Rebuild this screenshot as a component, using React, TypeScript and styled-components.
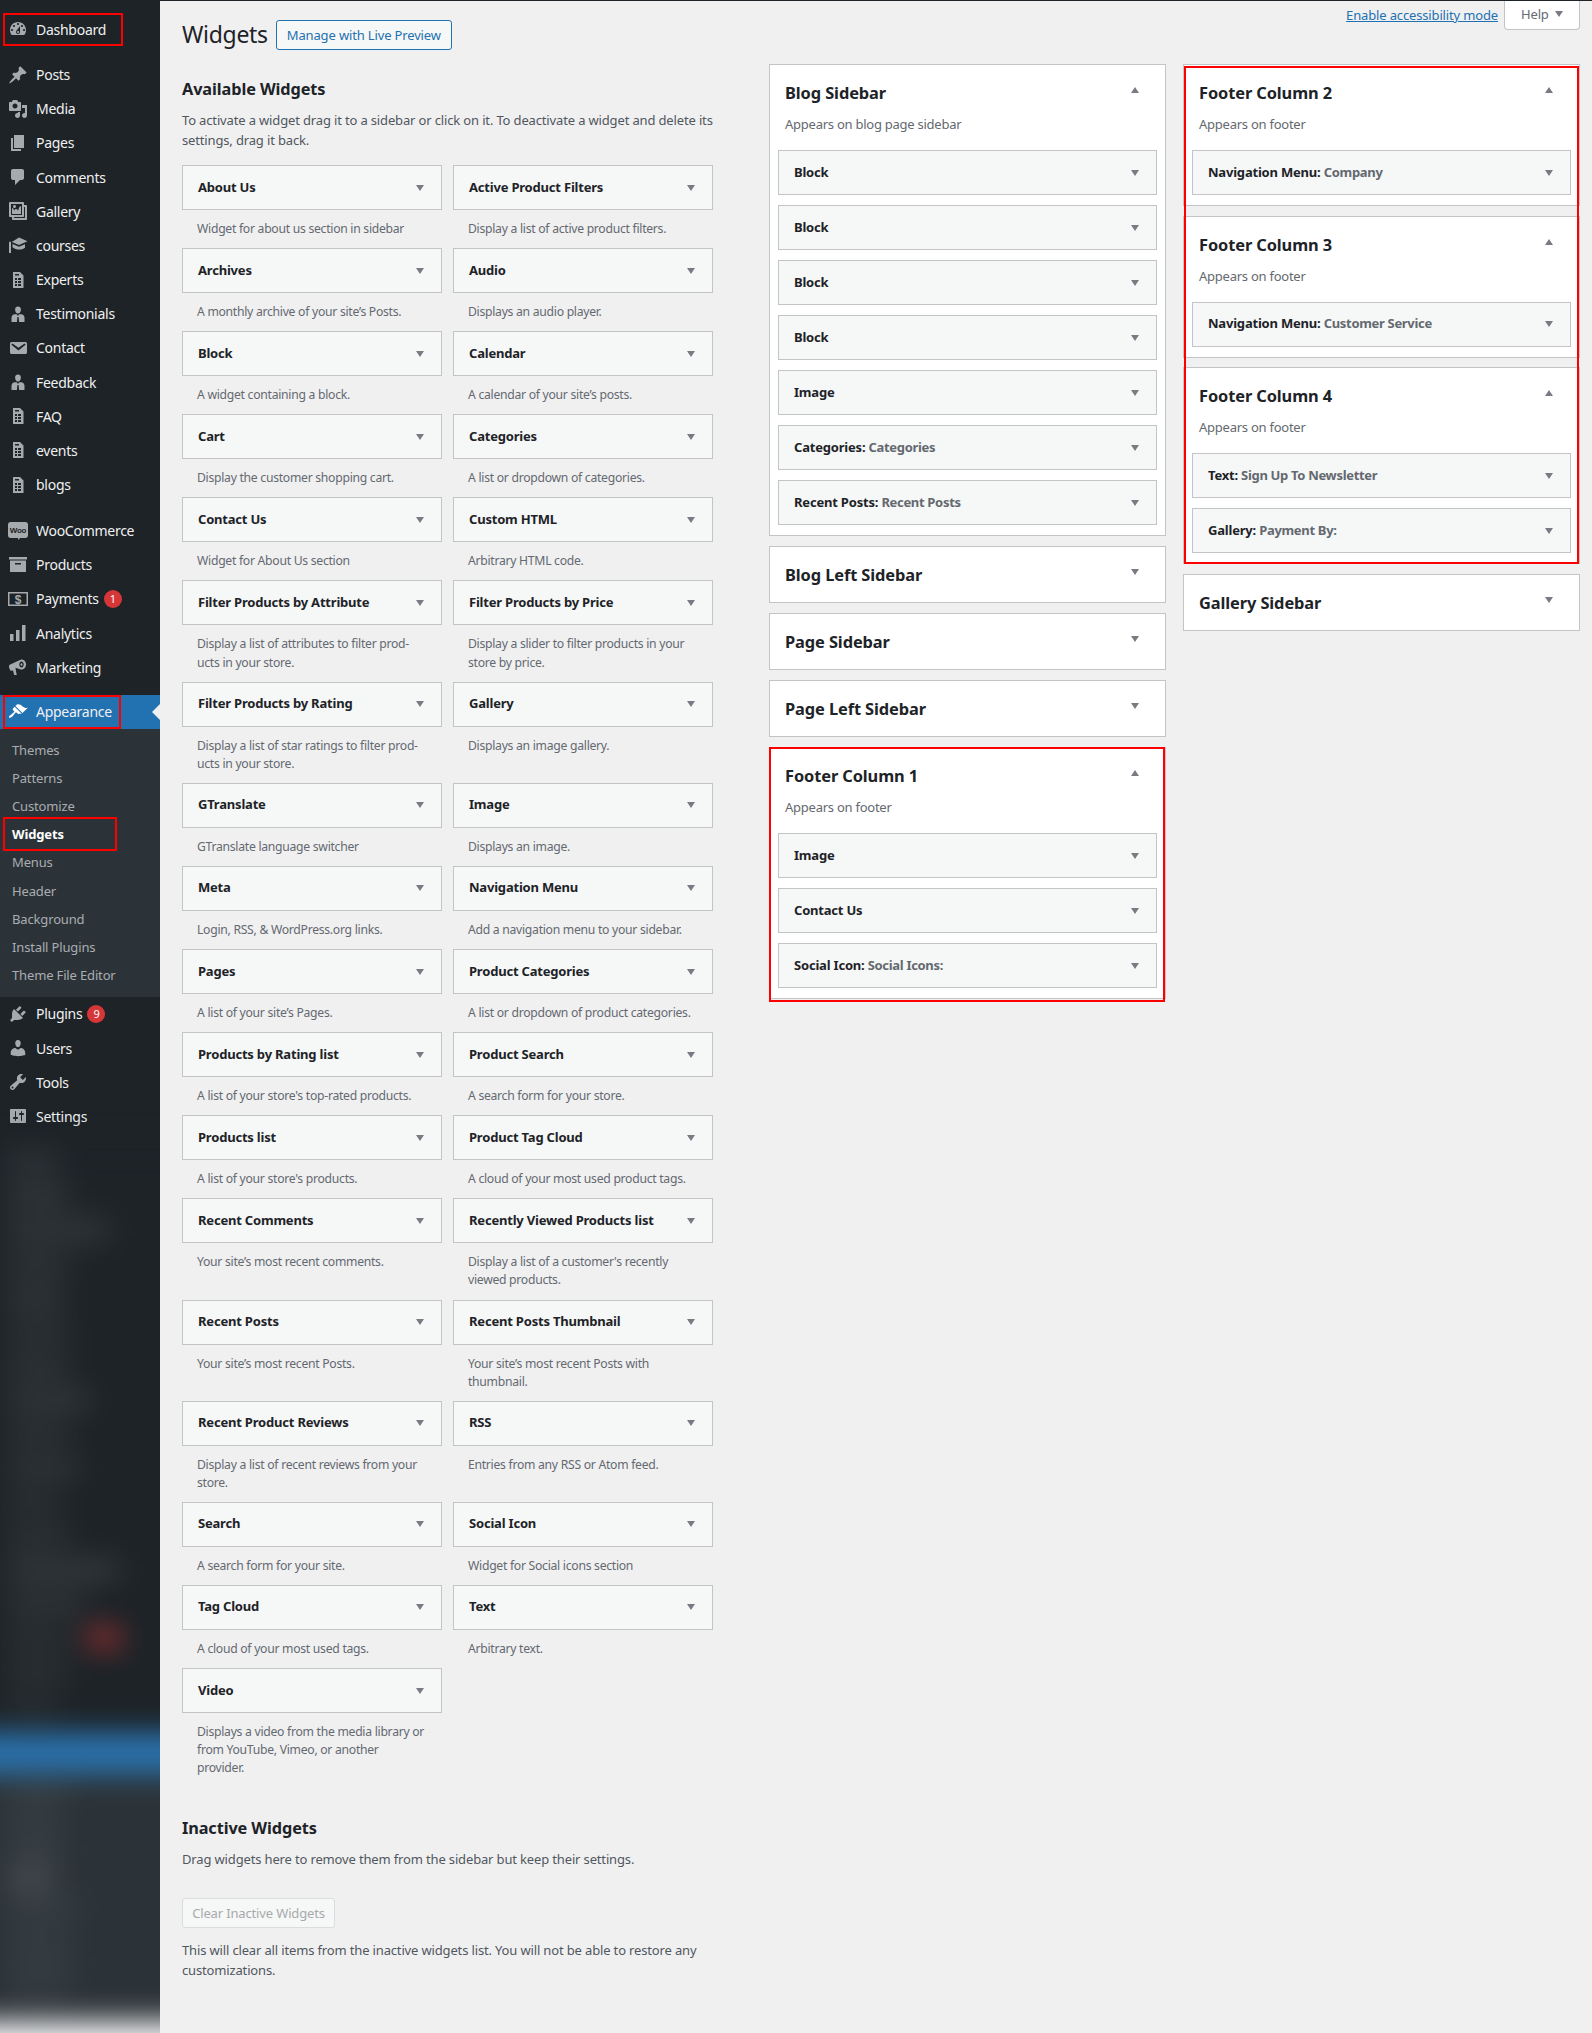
import React from "react";
import styled, { createGlobalStyle } from "styled-components";

const FONT = `"Noto Sans", "Open Sans", "Liberation Sans", sans-serif`;

const Global = createGlobalStyle`
  html, body { margin: 0; padding: 0; background: #f0f0f1; }
  body { font-family: ${FONT}; font-size: 13px; color: #3c434a; }
  * { box-sizing: border-box; }
`;

const Shell = styled.div`
  display: flex;
  width: 1592px;
  height: 2033px;
  overflow: hidden;
  border-top: 1px solid #1d2327;
  background: #f0f0f1;
`;

const Side = styled.aside`
  flex: 0 0 160px;
  width: 160px;
  height: 2032px;
  overflow: hidden;
  background: linear-gradient(#1d2327 1500px, transparent 1500px);
`;

const Nav = styled.nav`
  display: flex;
  flex-direction: column;
  padding-top: 11.4px;
  height: 1144px;
`;

const Sep = styled.div<{ $h: number }>`
  flex: 0 0 ${(p) => p.$h}px;
`;

const Row = styled.div<{ $active?: boolean }>`
  position: relative;
  flex: 0 0 34.17px;
  display: flex;
  align-items: center;
  padding-left: 8px;
  font-size: 14px;
  letter-spacing: -0.27px;
  color: #f0f0f1;
  background: ${(p) => (p.$active ? "#2271b1" : "transparent")};
  svg { flex: 0 0 20px; width: 20px; height: 20px; fill: ${(p) => (p.$active ? "#fff" : "#a7aaad")}; }
`;

const Label = styled.span`
  margin-left: 8px;
  white-space: nowrap;
`;

const Badge = styled.span`
  display: inline-flex;
  align-items: center;
  justify-content: center;
  width: 18px;
  height: 18px;
  margin-left: 5px;
  border-radius: 50%;
  background: #d63638;
  color: #fff;
  font-size: 11px;
`;

const Pointer = styled.span`
  position: absolute;
  right: 0;
  top: 50%;
  margin-top: -8px;
  border: 8px solid transparent;
  border-left-width: 0;
  border-right-color: #f0f0f1;
`;

const Sub = styled.div`
  flex: 0 0 268px;
  padding: 7px 0;
  background: #2c3338;
  display: flex;
  flex-direction: column;
`;

const SubRow = styled.div<{ $current?: boolean }>`
  position: relative;
  flex: 0 0 28.12px;
  display: flex;
  align-items: center;
  padding-left: 12px;
  font-size: 13px;
  letter-spacing: -0.15px;
  font-weight: ${(p) => (p.$current ? 700 : 400)};
  color: ${(p) => (p.$current ? "#fff" : "#a9adb1")};
`;

const Mark = styled.span<{ $t: number; $l: number; $w: number; $h: number }>`
  position: absolute;
  top: ${(p) => p.$t}px;
  left: ${(p) => p.$l}px;
  width: ${(p) => p.$w}px;
  height: ${(p) => p.$h}px;
  border: 2px solid #ff0000;
  pointer-events: none;
  z-index: 2;
`;

const BlurArea = styled.div`
  margin: 0 -40px;
  height: 876px;
  filter: blur(14px);
  display: flex;
  flex-direction: column;
  background: #1d2327;
`;

const BlurDark = styled.div`
  flex: 0 0 587px;
  display: flex;
  flex-direction: column;
`;

const BlurBlue = styled.div`
  flex: 0 0 42px;
  background: #2a72ad;
`;

const BlurSub = styled.div`
  flex: 1;
  padding-top: 7px;
  background: #2c3338;
  display: flex;
  flex-direction: column;
`;

const BlurRow = styled.div<{ $h: number }>`
  flex: 0 0 ${(p) => p.$h}px;
  display: flex;
  align-items: center;
  gap: 12px;
  padding-left: 48px;
`;

const BlurBar = styled.span<{ $w: number; $o: number }>`
  display: block;
  width: ${(p) => p.$w}px;
  height: 20px;
  background: rgba(255, 255, 255, ${(p) => p.$o});
`;

const BlurBadge = styled.span`
  display: block;
  width: 36px;
  height: 24px;
  margin-left: 6px;
  background: #d63638;
  opacity: 0.55;
`;

const Content = styled.main`
  flex: 1;
  display: flex;
  gap: 56px;
  padding: 0 12px 0 22px;
`;

const LeftCol = styled.section`
  flex: 0 0 531px;
  padding-top: 19px;
`;

const TitleRow = styled.div`
  display: flex;
  align-items: center;
  height: 30px;
  gap: 8px;
`;

const H1 = styled.h1`
  margin: 0;
  padding-bottom: 2px;
  font-size: 23px;
  font-weight: 400;
  letter-spacing: -0.3px;
  color: #1d2327;
`;

const LiveBtn = styled.a`
  display: flex;
  align-items: center;
  justify-content: center;
  width: 176px;
  height: 30px;
  padding-bottom: 1px;
  border: 1px solid #2271b1;
  border-radius: 3px;
  background: #f6f7f7;
  color: #2271b1;
  letter-spacing: -0.15px;
`;

const H3 = styled.h3<{ $top: number }>`
  margin: ${(p) => p.$top}px 0 9px;
  font-size: 16.3px;
  line-height: 24px;
  font-weight: 700;
  letter-spacing: -0.1px;
  color: #1d2327;
`;

const Para = styled.p`
  margin: 0;
  line-height: 20px;
  letter-spacing: -0.15px;
  color: #50575e;
  white-space: pre-line;
`;

const WidgetGrid = styled.div`
  display: grid;
  grid-template-columns: 260px 260px;
  column-gap: 11px;
  margin-top: 15px;
`;

const Cell = styled.div``;

const WidgetTop = styled.div`
  display: flex;
  align-items: center;
  justify-content: space-between;
  height: 45px;
  padding: 0 17px 0 15px;
  background: #f6f7f7;
  border: 1px solid #c3c4c7;
  color: #1d2327;
  font-weight: 700;
  font-size: 13px;
  letter-spacing: -0.2px;
`;

const WidgetName = styled.span`
  padding-bottom: 2px;
`;

const Arrow = styled.span<{ $up?: boolean }>`
  flex: 0 0 auto;
  width: 0;
  height: 0;
  border-left: 4px solid transparent;
  border-right: 4px solid transparent;
  ${(p) => (p.$up ? "border-bottom: 6px solid #787c82;" : "border-top: 6px solid #787c82;")}
`;

const Sub2 = styled.span`
  font-weight: 700;
  letter-spacing: -0.32px;
  color: #646970;
`;

const Desc = styled.div`
  padding: 10px 0 10px 15px;
  line-height: 18.1px;
  font-size: 12.2px;
  letter-spacing: -0.28px;
  color: #646970;
  white-space: pre-line;
`;

const ClearBtn = styled.div`
  display: flex;
  align-items: center;
  justify-content: center;
  width: 153px;
  height: 30px;
  margin: 29px 0 12px;
  background: #f6f7f7;
  border: 1px solid #dcdcde;
  border-radius: 3px;
  color: #a7aaad;
  letter-spacing: -0.15px;
`;

const RightArea = styled.section`
  flex: 1;
  display: flex;
  flex-direction: column;
`;

const Meta = styled.div`
  flex: 0 0 63px;
  display: flex;
  align-items: flex-start;
  justify-content: flex-end;
  gap: 6px;
`;

const A11y = styled.a`
  margin-top: 5px;
  line-height: 18px;
  color: #2271b1;
  text-decoration: underline;
  letter-spacing: -0.15px;
`;

const HelpTab = styled.div`
  display: flex;
  align-items: center;
  gap: 6px;
  height: 29px;
  width: 76px;
  padding: 0 0 2px 16px;
  background: #fff;
  border: 1px solid #c3c4c7;
  border-top: 0;
  border-radius: 0 0 4px 4px;
  color: #646970;
  letter-spacing: -0.15px;
`;

const Columns = styled.div`
  display: grid;
  grid-template-columns: 397px 397px;
  column-gap: 17px;
  align-items: start;
`;

const Stack = styled.div<{ $gap?: number }>`
  position: relative;
  display: flex;
  flex-direction: column;
  gap: ${(p) => p.$gap ?? 10}px;
`;

const Annot = styled.span<{ $t: number; $r: number; $b: number; $l: number }>`
  position: absolute;
  top: ${(p) => p.$t}px;
  right: ${(p) => p.$r}px;
  bottom: ${(p) => p.$b}px;
  left: ${(p) => p.$l}px;
  border: 2px solid #ff0000;
  pointer-events: none;
`;

const Box = styled.div`
  position: relative;
  background: #fff;
  border: 1px solid #c3c4c7;
`;

const BoxHead = styled.div<{ $open?: boolean }>`
  display: flex;
  justify-content: space-between;
  align-items: flex-start;
  padding: 15px 26px ${(p) => (p.$open ? 0 : 14)}px 15px;
  ${Arrow} { margin-top: 7px; }
`;

const BoxTitle = styled.h2`
  margin: 0;
  font-size: 16.4px;
  line-height: 26px;
  font-weight: 700;
  letter-spacing: -0.1px;
  color: #1d2327;
`;

const BoxDesc = styled.p`
  margin: 9px 0 0;
  padding: 0 15px;
  line-height: 18px;
  letter-spacing: -0.25px;
  color: #646970;
`;

const BoxList = styled.div`
  display: flex;
  flex-direction: column;
  gap: 10px;
  padding: 17px 8px 10px;
`;

const ic: Record<string, React.ReactNode> = {
  dashboard: <path d="M3.76 16h12.48c1.1-1.37 1.76-3.11 1.76-5 0-4.42-3.58-8-8-8s-8 3.58-8 8c0 1.89.66 3.63 1.76 5zM10 4c.55 0 1 .45 1 1s-.45 1-1 1-1-.45-1-1 .45-1 1-1zM6 6c.55 0 1 .45 1 1s-.45 1-1 1-1-.45-1-1 .45-1 1-1zm8 0c.55 0 1 .45 1 1s-.45 1-1 1-1-.45-1-1 .45-1 1-1zm-5.37 5.55L12 7v6c0 1.1-.9 2-2 2s-2-.9-2-2c0-.57.24-1.08.63-1.45zM4 10c.55 0 1 .45 1 1s-.45 1-1 1-1-.45-1-1 .45-1 1-1zm12 0c.55 0 1 .45 1 1s-.45 1-1 1-1-.45-1-1 .45-1 1-1zm-5 3c0-.55-.45-1-1-1s-1 .45-1 1 .45 1 1 1 1-.45 1-1z" fillRule="evenodd" />,
  post: <path d="M10.44 3.02l1.82-1.82 6.36 6.35-1.83 1.82c-1.05-.68-2.48-.57-3.41.36l-.75.75c-.92.93-1.04 2.35-.35 3.41l-1.83 1.82-2.41-2.41-2.8 2.79c-.42.42-3.38 2.71-3.8 2.29s1.86-3.39 2.28-3.81l2.79-2.79L4.1 9.36l1.83-1.82c1.05.69 2.48.57 3.4-.36l.75-.75c.93-.92 1.05-2.35.36-3.41z" />,
  media: <path d="M13 11V4c0-.55-.45-1-1-1h-1.67L9 1H5L3.67 3H2c-.55 0-1 .45-1 1v7c0 .55.45 1 1 1h10c.55 0 1-.45 1-1zM7 4.5c1.38 0 2.5 1.12 2.5 2.5S8.38 9.5 7 9.5 4.5 8.38 4.5 7 5.62 4.5 7 4.5zM14 6h5v10.5c0 1.38-1.12 2.5-2.5 2.5S14 17.88 14 16.5s1.12-2.5 2.5-2.5c.17 0 .34.02.5.05V9h-3V6zm-4 8.05V13h2v3.5c0 1.38-1.12 2.5-2.5 2.5S7 17.88 7 16.5 8.12 14 9.5 14c.17 0 .34.02.5.05z" fillRule="evenodd" />,
  page: <path d="M6 15V2h10v13H6zm-1 1h8v2H3V5h2v11z" />,
  comments: <path d="M5 2h9c1.1 0 2 .9 2 2v7c0 1.1-.9 2-2 2h-2l-5 5v-5H5c-1.1 0-2-.9-2-2V4c0-1.1.9-2 2-2z" />,
  gallery: <path d="M16 4h1.96c.57 0 1.04.47 1.04 1.04v12.92c0 .57-.47 1.04-1.04 1.04H5.04C4.47 19 4 18.53 4 17.96V16H2.04C1.47 16 1 15.53 1 14.96V2.04C1 1.47 1.47 1 2.04 1h12.92c.57 0 1.04.47 1.04 1.04V4zM3 14h11V3H3v11zm5-8.5C8 4.67 7.33 4 6.5 4S5 4.67 5 5.5 5.67 7 6.5 7 8 6.33 8 5.5zm2 4.5s1-5 3-5v8H4V7c2 0 2 3 2 3s.33-2 2-2 2 2 2 2zm7 7V6h-1v8.96c0 .57-.47 1.04-1.04 1.04H6v1h11z" fillRule="evenodd" />,
  learn: <path d="M11 2.500l8.500 3.700L11 9.900 3.800 6.900 11 2.500zM1 7l1.700-.5.3 1.300V18H1V7zm3.500 2.100L11 11.800l6-2.500v3.400c-1.500 1.200-3.800 1.900-6 1.900s-4.600-.9-6.500-2.400V9.100z" />,
  sheet: <path fillRule="evenodd" d="M5 2h7l3.500 3.500V18H5V2zm2 6v2h2V8H7zm3 0v2h3V8h-3zm-3 3v2h2v-2H7zm3 0v2h3v-2h-3zm-3 3v2h2v-2H7zm3 0v2h3v-2h-3zM7 4v1.500h4V4H7z" />,
  person: <path d="M10 9.500c-1.900 0-2.900-2-2.900-3.800C7.100 3.600 8.200 2.500 10 2.500s2.900 1.100 2.900 3.200c0 1.800-1 3.800-2.900 3.800zM6.900 10.300h1.900L10 12l1.200-1.700h1.900c2 0 3.400 1.700 3.400 3.500V18H3.500v-4.200c0-1.800 1.400-3.500 3.400-3.500zM9.400 13l-.5 5h2.200l-.5-5H9.400z" fillRule="evenodd" />,
  email: <path d="M3.87 4h13.25C18.37 4 19 4.59 19 5.79v8.420c0 1.190-.63 1.790-1.880 1.790H3.870c-1.250 0-1.880-.6-1.880-1.790V5.790c0-1.200.63-1.790 1.880-1.790zm6.620 8.600l6.740-5.530c.24-.2.43-.66.13-1.070-.29-.41-.82-.42-1.170-.17l-5.700 3.860L4.800 5.830c-.35-.25-.88-.24-1.170.17-.3.41-.11.87.13 1.070z" fillRule="evenodd" />,
  woo: (
    <>
      <path d="M2.500 1h15C18.900 1 20 2 20 3.500v11c0 1.400-1.100 2.500-2.500 2.500H12l-1.500 2-.5-2H2.500C1.100 17 0 15.900 0 14.500v-11C0 2 1.100 1 2.500 1z" />
      <text x="10" y="11.500" textAnchor="middle" fontSize="8" fontWeight="700" fill="#1d2327" fontFamily="Liberation Sans, sans-serif">Woo</text>
    </>
  ),
  archive: <path d="M19 2v2.500H1V2h18zM2 5.500h16V17H2V5.500zm5 2.500v1.500h6V8H7z" fillRule="evenodd" />,
  pay: (
    <>
      <path d="M0 3h20v14H0V3zm1.500 1.500v11h17v-11h-17z" fillRule="evenodd" />
      <text x="10" y="14.500" textAnchor="middle" fontSize="12" fontWeight="700" fontFamily="Liberation Sans, sans-serif">$</text>
    </>
  ),
  bars: <path d="M2 11h3.500v7H2v-7zm6-4h3.500v11H8V7zm6-5h3.500v16H14V2z" />,
  mega: <path fillRule="evenodd" d="M13.500 2.500c2.600 0 4.500 2.300 4.500 5s-1.900 5-4.500 5c-.3 0-.6 0-.9-.1L7.500 10.800 8 14.500l.8 3.500H6.200L5 13.400l-2.500.4L1 10.500l.2-2.500L12 3c.5-.3 1-.5 1.500-.5zm0 2c-1.300 0-2.200 1.400-2.200 3s.9 3 2.200 3 2.200-1.400 2.200-3-.9-3-2.200-3zm0 1.700c.6 0 1 .6 1 1.300s-.4 1.300-1 1.300-1-.6-1-1.300.4-1.300 1-1.300z" />,
  brush: <path d="M14.48 11.060L7.410 3.990l1.500-1.500c.5-.56 2.300-.47 3.510.32 1.210.8 1.430 1.280 2.910 2.100 1.180.64 2.450 1.260 4.450.85zm-.71.71L6.700 4.700 4.930 6.470c-.39.39-.39 1.020 0 1.410l1.060 1.060c.39.39.39 1.030 0 1.420-.6.6-1.430 1.110-2.210 1.690-.35.26-.7.53-1.010.84C1.430 13.230.4 14.910 1.100 15.610c.71.7 2.380-.33 3.720-1.670.31-.31.58-.66.84-1.010.58-.78 1.090-1.610 1.690-2.210.39-.39 1.020-.39 1.410 0l1.060 1.060c.39.39 1.020.39 1.410 0z" />,
  plugin: <path d="M13.110 4.360L9.870 7.600 8 5.730l3.240-3.240c.35-.34 1.050-.2 1.560.32.52.51.66 1.210.31 1.550zm-8 1.770l.91-1.120 9.010 9.010-1.190.84c-.71.71-2.630 1.160-3.820 1.160H6.140L4.900 17.260c-.59.59-1.540.59-2.120 0-.59-.58-.59-1.530 0-2.120l1.240-1.240v-3.880c0-1.130.4-3.190 1.090-3.890zm7.260 3.970l3.240-3.240c.34-.35 1.040-.21 1.550.31.52.51.66 1.210.31 1.550l-3.240 3.250z" />,
  users: <path d="M10 9.250c-2.270 0-2.730-3.440-2.730-3.440C7 4.020 7.820 2 9.970 2c2.160 0 2.980 2.020 2.710 3.810 0 0-.41 3.440-2.680 3.440zm0 2.570L12.720 10c2.390 0 4.520 2.330 4.520 4.530v2.490s-3.650 1.130-7.240 1.130c-3.650 0-7.240-1.130-7.240-1.130v-2.490c0-2.250 1.940-4.480 4.470-4.480z" />,
  tools: <path d="M16.68 9.770c-1.34 1.34-3.30 1.670-4.950.99l-5.410 6.520c-.99.99-2.590.99-3.580 0s-.99-2.590 0-3.570l6.520-5.420c-.68-1.650-.35-3.610.99-4.950 1.280-1.280 3.120-1.620 4.720-1.060l-2.890 2.890 2.820 2.820 2.860-2.870c.53 1.580.18 3.390-1.080 4.650zM3.810 16.210c.4.39 1.040.39 1.430 0 .4-.4.4-1.040 0-1.430-.39-.4-1.030-.4-1.430 0-.39.39-.39 1.030 0 1.430z" fillRule="evenodd" />,
  settings: <path d="M18 16V4c0-.55-.45-1-1-1H3c-.55 0-1 .45-1 1v12c0 .55.45 1 1 1h14c.55 0 1-.45 1-1zM8 11h1c.55 0 1 .45 1 1s-.45 1-1 1H8v1.500c0 .28-.22.5-.5.5s-.5-.22-.5-.5V13H6c-.55 0-1-.45-1-1s.45-1 1-1h1V5.500c0-.28.22-.5.5-.5s.5.22.5.5V11zm5-2h-1c-.55 0-1-.45-1-1s.45-1 1-1h1V5.500c0-.28.22-.5.5-.5s.5.22.5.5V7h1c.55 0 1 .45 1 1s-.45 1-1 1h-1v5.500c0 .28-.22.5-.5.5s-.5-.22-.5-.5V9z" fillRule="evenodd" />,
};

const Icon = ({ name }: { name: string }) => <svg viewBox="0 0 20 20">{ic[name]}</svg>;

const MenuRow = ({ icon, label, badge }: { icon: string; label: string; badge?: string }) => (
  <Row>
    <Icon name={icon} />
    <Label>{label}</Label>
    {badge && <Badge>{badge}</Badge>}
  </Row>
);

const groupA: [string, string][] = [
  ["post", "Posts"], ["media", "Media"], ["page", "Pages"], ["comments", "Comments"], ["gallery", "Gallery"],
  ["learn", "courses"], ["sheet", "Experts"], ["person", "Testimonials"], ["email", "Contact"], ["person", "Feedback"],
  ["sheet", "FAQ"], ["sheet", "events"], ["sheet", "blogs"],
];

const subItems = ["Themes", "Patterns", "Customize", "Widgets", "Menus", "Header", "Background", "Install Plugins", "Theme File Editor"];

const blurDark: { w: number; o: number; red?: boolean }[] = [
  { w: 50, o: 0.09 }, { w: 60, o: 0.1 }, { w: 100, o: 0.1 }, { w: 60, o: 0.09 }, { w: 55, o: 0.1 }, { w: 60, o: 0.08 },
  { w: 60, o: 0.09 }, { w: 80, o: 0.1 }, { w: 60, o: 0.08 }, { w: 70, o: 0.09 }, { w: 50, o: 0.07 }, { w: 60, o: 0.08 },
  { w: 110, o: 0.11 }, { w: 75, o: 0.09 }, { w: 60, o: 0.07, red: true }, { w: 60, o: 0.07 }, { w: 50, o: 0.06 },
];

const blurSub = [
  { w: 60, o: 0.06 }, { w: 50, o: 0.06 }, { w: 55, o: 0.07 }, { w: 45, o: 0.14 }, { w: 70, o: 0.06 }, { w: 60, o: 0.05 },
  { w: 65, o: 0.06 }, { w: 60, o: 0.05 },
];

type W = { t: string; d: string };
const widgets: W[] = [
  { t: "About Us", d: "Widget for about us section in sidebar" },
  { t: "Active Product Filters", d: "Display a list of active product filters." },
  { t: "Archives", d: "A monthly archive of your site’s Posts." },
  { t: "Audio", d: "Displays an audio player." },
  { t: "Block", d: "A widget containing a block." },
  { t: "Calendar", d: "A calendar of your site’s posts." },
  { t: "Cart", d: "Display the customer shopping cart." },
  { t: "Categories", d: "A list or dropdown of categories." },
  { t: "Contact Us", d: "Widget for About Us section" },
  { t: "Custom HTML", d: "Arbitrary HTML code." },
  { t: "Filter Products by Attribute", d: "Display a list of attributes to filter prod-\nucts in your store." },
  { t: "Filter Products by Price", d: "Display a slider to filter products in your\nstore by price." },
  { t: "Filter Products by Rating", d: "Display a list of star ratings to filter prod-\nucts in your store." },
  { t: "Gallery", d: "Displays an image gallery." },
  { t: "GTranslate", d: "GTranslate language switcher" },
  { t: "Image", d: "Displays an image." },
  { t: "Meta", d: "Login, RSS, & WordPress.org links." },
  { t: "Navigation Menu", d: "Add a navigation menu to your sidebar." },
  { t: "Pages", d: "A list of your site’s Pages." },
  { t: "Product Categories", d: "A list or dropdown of product categories." },
  { t: "Products by Rating list", d: "A list of your store's top-rated products." },
  { t: "Product Search", d: "A search form for your store." },
  { t: "Products list", d: "A list of your store's products." },
  { t: "Product Tag Cloud", d: "A cloud of your most used product tags." },
  { t: "Recent Comments", d: "Your site’s most recent comments." },
  { t: "Recently Viewed Products list", d: "Display a list of a customer's recently\nviewed products." },
  { t: "Recent Posts", d: "Your site’s most recent Posts." },
  { t: "Recent Posts Thumbnail", d: "Your site’s most recent Posts with\nthumbnail." },
  { t: "Recent Product Reviews", d: "Display a list of recent reviews from your\nstore." },
  { t: "RSS", d: "Entries from any RSS or Atom feed." },
  { t: "Search", d: "A search form for your site." },
  { t: "Social Icon", d: "Widget for Social icons section" },
  { t: "Tag Cloud", d: "A cloud of your most used tags." },
  { t: "Text", d: "Arbitrary text." },
  { t: "Video", d: "Displays a video from the media library or\nfrom YouTube, Vimeo, or another\nprovider." },
];

type Item = [string, string?];

const ItemRow = ({ name, sub }: { name: string; sub?: string }) => (
  <WidgetTop>
    <WidgetName>
      {name}
      {sub && ": "}
      {sub && <Sub2>{sub}</Sub2>}
    </WidgetName>
    <Arrow />
  </WidgetTop>
);

const SideBox = ({ title, desc, items, children }: { title: string; desc?: string; items?: Item[]; children?: React.ReactNode }) => (
  <Box>
    <BoxHead $open={!!items}>
      <BoxTitle>{title}</BoxTitle>
      <Arrow $up={!!items} />
    </BoxHead>
    {items && <BoxDesc>{desc}</BoxDesc>}
    {items && (
      <BoxList>
        {items.map(([a, b], i) => (
          <ItemRow key={i} name={a} sub={b} />
        ))}
      </BoxList>
    )}
    {children}
  </Box>
);

export default function App() {
  return (
    <>
      <Global />
      <Shell>
        <Side>
          <Nav>
            <Row>
              <Icon name="dashboard" />
              <Label>Dashboard</Label>
              <Mark $t={1} $l={3} $w={120} $h={33} />
            </Row>
            <Sep $h={11} />
            {groupA.map(([i, l]) => (
              <MenuRow key={l} icon={i} label={l} />
            ))}
            <Sep $h={12} />
            <MenuRow icon="woo" label="WooCommerce" />
            <MenuRow icon="archive" label="Products" />
            <MenuRow icon="pay" label="Payments" badge="1" />
            <MenuRow icon="bars" label="Analytics" />
            <MenuRow icon="mega" label="Marketing" />
            <Sep $h={10.4} />
            <Row $active>
              <Icon name="brush" />
              <Label>Appearance</Label>
              <Pointer />
              <Mark $t={0} $l={3} $w={118} $h={34} />
            </Row>
            <Sub>
              {subItems.map((s) => (
                <SubRow key={s} $current={s === "Widgets"}>
                  {s}
                  {s === "Widgets" && <Mark $t={-3} $l={3} $w={114} $h={34} />}
                </SubRow>
              ))}
            </Sub>
            <MenuRow icon="plugin" label="Plugins" badge="9" />
            <MenuRow icon="users" label="Users" />
            <MenuRow icon="tools" label="Tools" />
            <MenuRow icon="settings" label="Settings" />
          </Nav>
          <BlurArea>
            <BlurDark>
              {blurDark.map((b, i) => (
                <BlurRow key={i} $h={34}>
                  <BlurBar $w={b.w} $o={b.o} />
                  {b.red && <BlurBadge />}
                </BlurRow>
              ))}
            </BlurDark>
            <BlurBlue />
            <BlurSub>
              {blurSub.map((b, i) => (
                <BlurRow key={i} $h={28}>
                  <BlurBar $w={b.w} $o={b.o} />
                </BlurRow>
              ))}
            </BlurSub>
          </BlurArea>
        </Side>
        <Content>
          <LeftCol>
            <TitleRow>
              <H1>Widgets</H1>
              <LiveBtn>Manage with Live Preview</LiveBtn>
            </TitleRow>
            <H3 $top={27}>Available Widgets</H3>
            <Para>{"To activate a widget drag it to a sidebar or click on it. To deactivate a widget and delete its\nsettings, drag it back."}</Para>
            <WidgetGrid>
              {widgets.map((w) => (
                <Cell key={w.t}>
                  <ItemRow name={w.t} />
                  <Desc>{w.d}</Desc>
                </Cell>
              ))}
            </WidgetGrid>
            <H3 $top={29}>Inactive Widgets</H3>
            <Para>Drag widgets here to remove them from the sidebar but keep their settings.</Para>
            <ClearBtn>Clear Inactive Widgets</ClearBtn>
            <Para>{"This will clear all items from the inactive widgets list. You will not be able to restore any\ncustomizations."}</Para>
          </LeftCol>
          <RightArea>
            <Meta>
              <A11y>Enable accessibility mode</A11y>
              <HelpTab>
                Help
                <Arrow />
              </HelpTab>
            </Meta>
            <Columns>
              <Stack>
                <SideBox
                  title="Blog Sidebar"
                  desc="Appears on blog page sidebar"
                  items={[["Block"], ["Block"], ["Block"], ["Block"], ["Image"], ["Categories", "Categories"], ["Recent Posts", "Recent Posts"]]}
                />
                <SideBox title="Blog Left Sidebar" />
                <SideBox title="Page Sidebar" />
                <SideBox title="Page Left Sidebar" />
                <SideBox title="Footer Column 1" desc="Appears on footer" items={[["Image"], ["Contact Us"], ["Social Icon", "Social Icons:"]]}>
                  <Annot $t={-1} $r={0} $b={-4} $l={-1} />
                </SideBox>
              </Stack>
              <Stack>
                <Stack $gap={9.5}>
                  <SideBox title="Footer Column 2" desc="Appears on footer" items={[["Navigation Menu", "Company"]]} />
                  <SideBox title="Footer Column 3" desc="Appears on footer" items={[["Navigation Menu", "Customer Service"]]} />
                  <SideBox title="Footer Column 4" desc="Appears on footer" items={[["Text", "Sign Up To Newsletter"], ["Gallery", "Payment By:"]]} />
                  <Annot $t={2} $r={1} $b={0} $l={1} />
                </Stack>
                <SideBox title="Gallery Sidebar" />
              </Stack>
            </Columns>
          </RightArea>
        </Content>
      </Shell>
    </>
  );
}
